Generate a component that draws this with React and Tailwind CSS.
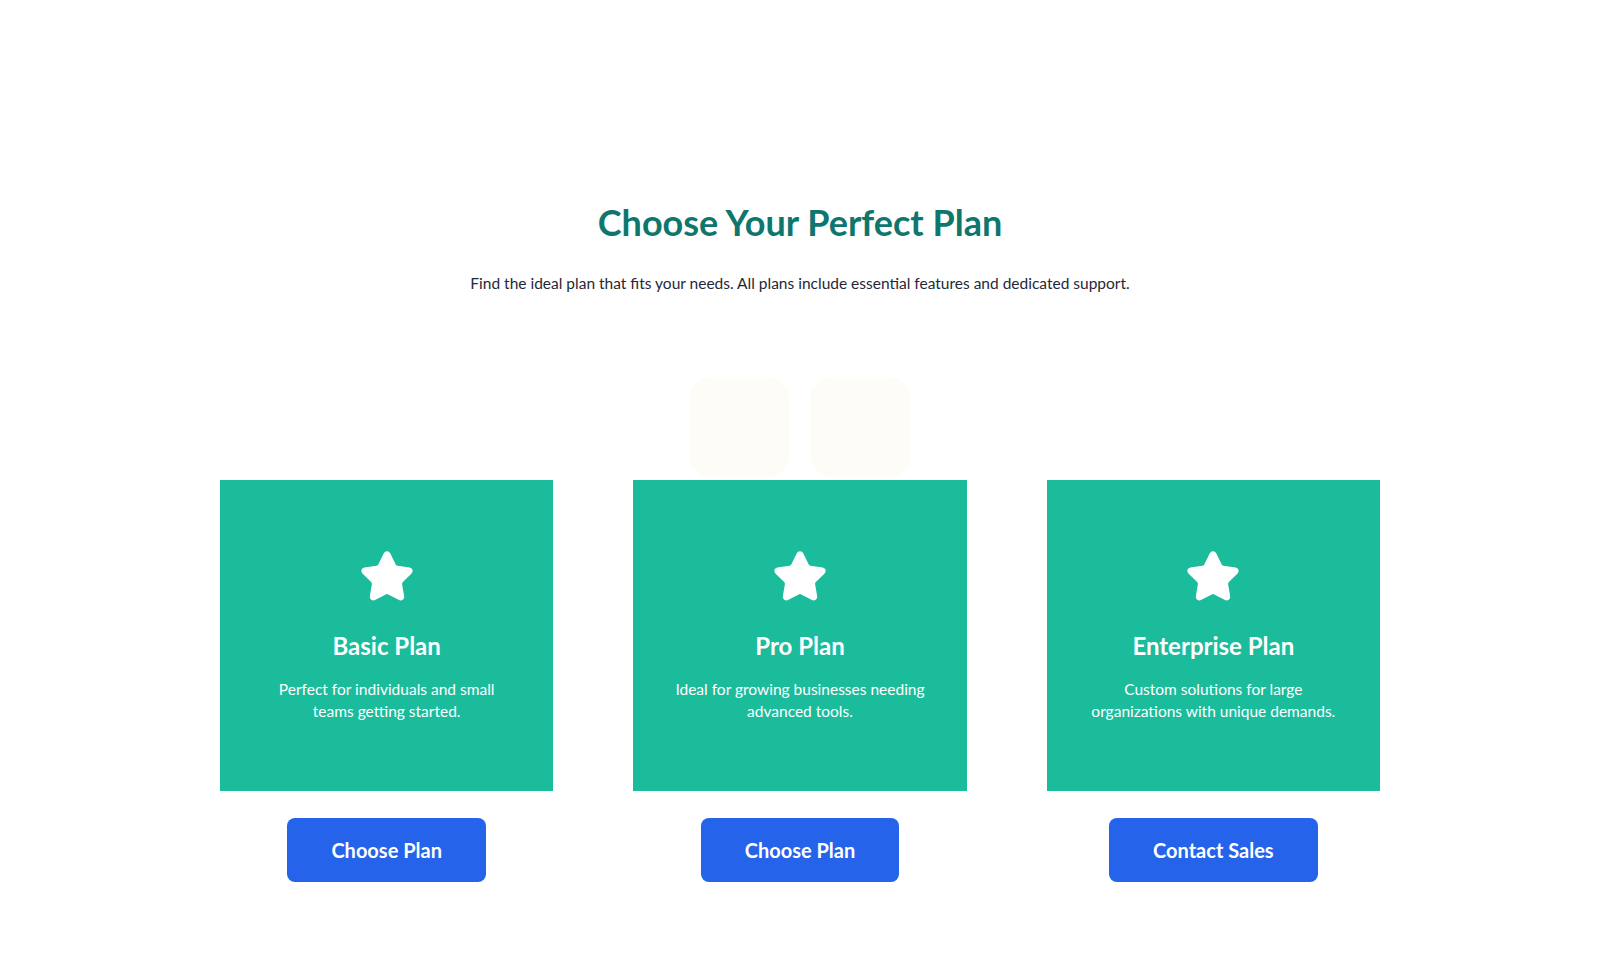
import { Star } from 'lucide-react';

const PLANS = [
  { name: 'Basic Plan', desc: ['Perfect for individuals and small', 'teams getting started.'], cta: 'Choose Plan' },
  { name: 'Pro Plan', desc: ['Ideal for growing businesses needing', 'advanced tools.'], cta: 'Choose Plan' },
  { name: 'Enterprise Plan', desc: ['Custom solutions for large', 'organizations with unique demands.'], cta: 'Contact Sales' },
];

function PlanCard({ plan }) {
  return (
    <div className="flex flex-col items-center">
      <div className="w-full h-[311px] bg-[#1abc9c] flex flex-col items-center pt-[69px] text-white text-center">
        <Star size={56} fill="white" stroke="white" strokeWidth={2} strokeLinejoin="round" />
        <h2 className="mt-[25px] text-[24px] leading-8 font-bold">{plan.name}</h2>
        <p className="mt-[16px] text-[15.5px] leading-[22px]">
          {plan.desc[0]}
          <br />
          {plan.desc[1]}
        </p>
      </div>
      <button
        type="button"
        className="mt-[27px] h-16 px-11 rounded-lg bg-[#2563eb] text-white text-[20px] font-bold"
      >
        {plan.cta}
      </button>
    </div>
  );
}

export default function App() {
  return (
    <div className="min-h-screen bg-white flex flex-col items-center pt-[202px] font-['Lato',sans-serif]">
      <h1 className="text-[36px] leading-10 font-bold text-[#0f766e]">Choose Your Perfect Plan</h1>
      <p className="mt-[29px] text-[15.5px] leading-6 text-[#1f2937]">
        Find the ideal plan that fits your needs. All plans include essential features and dedicated support.
      </p>

      {/* decorative tiles */}
      <div className="mt-[82px] flex gap-[22px]">
        <div className="w-[100px] h-[100px] rounded-[22px] bg-[#fdfcf7]" />
        <div className="w-[100px] h-[100px] rounded-[22px] bg-[#fdfcf7]" />
      </div>

      <div className="mt-[3px] w-[1160px] grid grid-cols-3 gap-20">
        {PLANS.map(p => (
          <PlanCard key={p.name} plan={p} />
        ))}
      </div>
    </div>
  );
}
